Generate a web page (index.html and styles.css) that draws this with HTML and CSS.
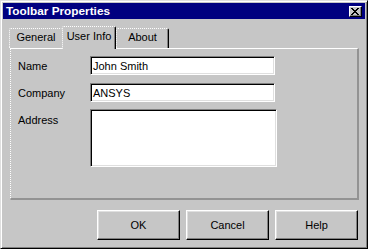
FILE: index.html
```html
<!DOCTYPE html>
<html>
<head>
<meta charset="utf-8">
<title>Toolbar Properties</title>
<link rel="stylesheet" href="styles.css">
</head>
<body>
<div class="window">
  <div class="titlebar">
    <span class="title">Toolbar Properties</span>
    <span class="close"><svg width="8" height="7" viewBox="0 0 8 7" shape-rendering="crispEdges"><path fill="#000" d="M0 0h2v1H0zM6 0h2v1H6zM1 1h2v1H1zM5 1h2v1H5zM2 2h4v1H2zM3 3h2v1H3zM2 4h4v1H2zM1 5h2v1H1zM5 5h2v1H5zM0 6h2v1H0zM6 6h2v1H6z"/></svg></span>
  </div>
  <div class="tabs">
    <div class="tab first">General</div>
    <div class="tab active">User Info</div>
    <div class="tab last">About</div>
  </div>
  <div class="panel">
    <div class="form">
      <div class="lbl">Name</div>
      <div class="field">John Smith</div>
      <div class="lbl">Company</div>
      <div class="field">ANSYS</div>
      <div class="lbl addr">Address</div>
      <div class="field area"></div>
    </div>
  </div>
  <div class="buttons">
    <div class="btn">OK</div>
    <div class="btn">Cancel</div>
    <div class="btn">Help</div>
  </div>
</div>
</body>
</html>
```

FILE: styles.css
```css
* { box-sizing: border-box; }
body {
  margin: 0;
  background: #c6c6c6;
  font-family: "Liberation Sans", Arial, sans-serif;
  font-size: 11px;
  color: #000;
}
.window {
  width: 368px;
  height: 249px;
  border: 1px solid;
  border-color: #dfdfdf #000 #000 #dfdfdf;
  box-shadow: inset 1px 1px #fff, inset -1px -1px #808080;
  padding: 2px;
  background: #c6c6c6;
  display: flex;
  flex-direction: column;
}
.titlebar {
  height: 16px;
  flex: none;
  background: #000080;
  color: #fff;
  display: flex;
  justify-content: space-between;
  align-items: flex-start;
  padding: 0 3px;
}
.title {
  font-weight: bold;
  font-size: 11.8px;
  line-height: 16px;
}
.close {
  width: 13px;
  height: 11px;
  margin-top: 3px;
  background: #c6c6c6;
  border: 1px solid;
  border-color: #fff #000 #000 #fff;
  box-shadow: inset -1px -1px #808080;
  display: flex;
  align-items: center;
  justify-content: center;
  padding-right: 1px;
  padding-bottom: 1px;
}
.close svg { display: block; }
.tabs {
  display: flex;
  align-items: flex-end;
  height: 22px;
  margin-top: 7px;
  padding-left: 6px;
  flex: none;
}
.tab {
  height: 20px;
  padding-top: 2px;
  line-height: 13px;
  text-align: center;
  border-top: 1px dotted #fff;
  border-left: 1px dotted #fff;
  border-right: 1px solid #000;
  box-shadow: inset -1px 0 #808080;
  border-radius: 2px 2px 0 0;
  background: #c6c6c6;
}
.tab.first {
  width: 53px;
  border-right: 0;
  box-shadow: none;
}
.tab.active {
  width: 54px;
  height: 23px;
  padding-top: 3px;
  margin-bottom: -1px;
  position: relative;
  z-index: 2;
}
.tab.last { width: 53px; }
.panel {
  flex: none;
  height: 152px;
  margin: 0 6px 0 7px;
  border-top: 1px solid #fff;
  border-left: 1px dotted #fff;
  border-right: 2px solid #939393;
  border-bottom: 2px solid #939393;
  padding: 7px 0 0 7px;
}
.form {
  display: grid;
  grid-template-columns: 72px 185px;
  row-gap: 8px;
  align-items: start;
}
.lbl {
  line-height: 18px;
  padding-top: 1px;
}
.field {
  height: 19px;
  background: #fff;
  border: 1px solid;
  border-color: #808080 #fff #fff #808080;
  box-shadow: inset 1px 1px #000, inset -1px -1px #dfdfdf;
  padding: 1px 2px 0;
  line-height: 16px;
  white-space: nowrap;
}
.field.area {
  width: 187px;
  height: 58px;
  margin-top: -1px;
}
.buttons {
  display: flex;
  gap: 6px;
  margin: 10px 0 0 94px;
}
.btn {
  width: 83px;
  height: 30px;
  border: 1px solid;
  border-color: #fff #000 #000 #fff;
  box-shadow: inset -1px -1px #808080, inset 1px 1px #dfdfdf;
  display: flex;
  align-items: center;
  justify-content: center;
  line-height: 13px;
}
```
